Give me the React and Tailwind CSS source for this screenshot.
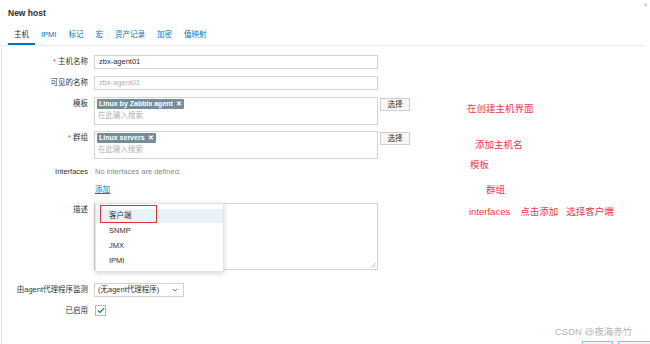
import React from "react";

const font = { fontFamily: '"Liberation Sans", "Noto Sans CJK SC", sans-serif' };

function Label({ children, req }) {
  return (
    <div className="w-[88px] shrink-0 text-right text-[7.5px] leading-[14px] text-[#333]">
      {req && <span className="text-[#d64541] mr-[2px]">*</span>}
      {children}
    </div>
  );
}

function Tag({ children }) {
  return (
    <div className="flex">
      <div className="flex items-center h-[10px] px-[2px] bg-[#768d99] text-white text-[7px] leading-[10px] font-bold rounded-[1px]">
        <span>{children}</span>
        <span className="ml-[3px] text-[7px]">✕</span>
      </div>
    </div>
  );
}

function SelectBtn() {
  return (
    <div className="ml-[2px] mt-[1px] w-[30px] h-[13px] border border-[#cfcfcf] bg-[#f7f7f7] text-[7.5px] leading-[11px] text-center text-[#333]">
      选择
    </div>
  );
}

export default function App() {
  return (
    <div className="relative w-[650px] h-[344px] overflow-hidden bg-white" style={font}>
      {/* header */}
      <div className="h-[26px] flex items-center pl-[8px] text-[8.5px] font-bold text-[#1f2c33]">New host</div>
      <div className="absolute right-[2px] top-[1px] text-[6px] text-[#bbb]">✕</div>

      {/* tabs */}
      <div className="h-[20px] mr-[5px] flex pl-[8px] border-b border-[#ececec]">
        {["主机", "IPMI", "标记", "宏", "资产记录", "加密", "值映射"].map((t, i) => (
          <div
            key={t}
            className={
              "px-[6px] text-[7.5px] leading-[18px] " +
              (i === 0 ? "border-b-2 border-[#0275b8] text-[#1f2c33]" : "text-[#0275b8]")
            }
          >
            {t}
          </div>
        ))}
      </div>

      {/* body */}
      <div className="absolute left-[1px] top-[47px] bottom-0 w-px bg-[#e3e3e3]" />
      <div className="flex flex-col pt-[9px]">
        <div className="flex gap-[6px]">
          <Label req>主机名称</Label>
          <div className="w-[284px] h-[14px] border border-[#d3d3d3] px-[4px] text-[7.5px] leading-[12px] text-[#1f2c33]">zbx-agent01</div>
        </div>
        <div className="flex gap-[6px] mt-[7px]">
          <Label>可见的名称</Label>
          <div className="w-[284px] h-[14px] border border-[#d3d3d3] px-[4px] text-[7.5px] leading-[12px] text-[#b0b0b0]">zbx-agent01</div>
        </div>
        <div className="flex gap-[6px] mt-[7px]">
          <Label>模板</Label>
          <div className="flex">
            <div className="w-[284px] h-[28px] border border-[#d3d3d3] pl-[2px] pt-[1px]">
              <Tag>Linux by Zabbix agent</Tag>
              <div className="text-[7.5px] leading-[14px] pl-[1px] text-[#b0b0b0]">在此输入搜索</div>
            </div>
            <SelectBtn />
          </div>
        </div>
        <div className="flex gap-[6px] mt-[6px]">
          <Label req>群组</Label>
          <div className="flex">
            <div className="w-[284px] h-[28px] border border-[#d3d3d3] pl-[2px] pt-[1px]">
              <Tag>Linux servers</Tag>
              <div className="text-[7.5px] leading-[14px] pl-[1px] text-[#b0b0b0]">在此输入搜索</div>
            </div>
            <SelectBtn />
          </div>
        </div>
        <div className="flex gap-[6px] mt-[6px]">
          <Label>Interfaces</Label>
          <div className="text-[7.5px] leading-[14px] pl-[1px] text-[#8a8a8a]">No interfaces are defined.</div>
        </div>
        <div className="flex gap-[6px] mt-[4px]">
          <div className="w-[88px]" />
          <div className="text-[7.5px] leading-[14px] pl-[1px] text-[#0275b8] underline">添加</div>
        </div>
        <div className="flex gap-[6px] mt-[6px]">
          <Label>描述</Label>
          <div className="relative w-[284px] h-[67px] border border-[#d3d3d3]">
            <svg className="absolute right-[1px] bottom-[1px]" width="6" height="6" viewBox="0 0 6 6">
              <path d="M5.5 1 L1 5.5 M5.5 3.5 L3.5 5.5" stroke="#aaa" strokeWidth="0.7" />
            </svg>
          </div>
        </div>
        <div className="flex gap-[6px] mt-[13px]">
          <Label>由agent代理程序监测</Label>
          <div className="w-[90px] h-[14px] border border-[#d3d3d3] pl-[3px] pr-[5px] flex items-center justify-between text-[7.5px] text-[#333]">
            <span>(无agent代理程序)</span>
            <svg width="6" height="4" viewBox="0 0 6 4">
              <path d="M1 1 L3 3 L5 1" stroke="#555" strokeWidth="0.8" fill="none" />
            </svg>
          </div>
        </div>
        <div className="flex gap-[6px] mt-[7px]">
          <Label>已启用</Label>
          <div className="w-[11px] h-[11px] border border-[#b8b8b8] flex items-center justify-center mt-[1px] ml-[1px]">
            <svg width="8" height="7" viewBox="0 0 8 7">
              <path d="M1 3.5 L3 5.5 L7 1.2" stroke="#0275b8" strokeWidth="1.2" fill="none" />
            </svg>
          </div>
        </div>
      </div>

      {/* dropdown */}
      <div className="absolute left-[95px] top-[203px] w-[129px] h-[69px] bg-white border border-[#e4e4e4] shadow-[0_1px_5px_rgba(0,0,0,0.18)] pt-[5px] text-[7.5px] text-[#333]">
        <div className="h-[14px] leading-[14px] pl-[13px] bg-[#e9f2f9]">客户端</div>
        <div className="h-[15px] leading-[15px] pl-[13px]">SNMP</div>
        <div className="h-[15px] leading-[15px] pl-[13px]">JMX</div>
        <div className="h-[15px] leading-[15px] pl-[13px]">IPMI</div>
      </div>
      <div className="absolute left-[100px] top-[205px] w-[57px] h-[18px] border-[1.5px] border-[#d9323c]" />

      {/* annotations */}
      <div className="absolute text-[9.5px] leading-[12px] text-[#e83a4a]" style={{ left: 467, top: 103 }}>在创建主机界面</div>
      <div className="absolute text-[9.5px] leading-[12px] text-[#e83a4a]" style={{ left: 475, top: 139 }}>添加主机名</div>
      <div className="absolute text-[9.5px] leading-[12px] text-[#e83a4a]" style={{ left: 470, top: 159 }}>模板</div>
      <div className="absolute text-[9.5px] leading-[12px] text-[#e83a4a]" style={{ left: 486, top: 184 }}>群组</div>
      <div className="absolute text-[9.5px] leading-[12px] text-[#e83a4a] flex" style={{ left: 469, top: 206 }}>
        <span>interfaces</span>
        <span className="ml-[10px]">点击添加</span>
        <span className="ml-[8px]">选择客户端</span>
      </div>

      {/* watermark */}
      <div className="absolute left-[555px] top-[325px] text-[9.5px] leading-[13px] text-[#b4b4b4]">CSDN @夜海赤竹</div>
      <div className="absolute left-[582px] top-[341px] w-[31px] h-[10px] border border-[#8fc3e3] bg-[#eef6fb]" />
      <div className="absolute left-[618px] top-[341px] w-[34px] h-[10px] border border-[#8fc3e3] bg-[#eef6fb]" />
    </div>
  );
}
